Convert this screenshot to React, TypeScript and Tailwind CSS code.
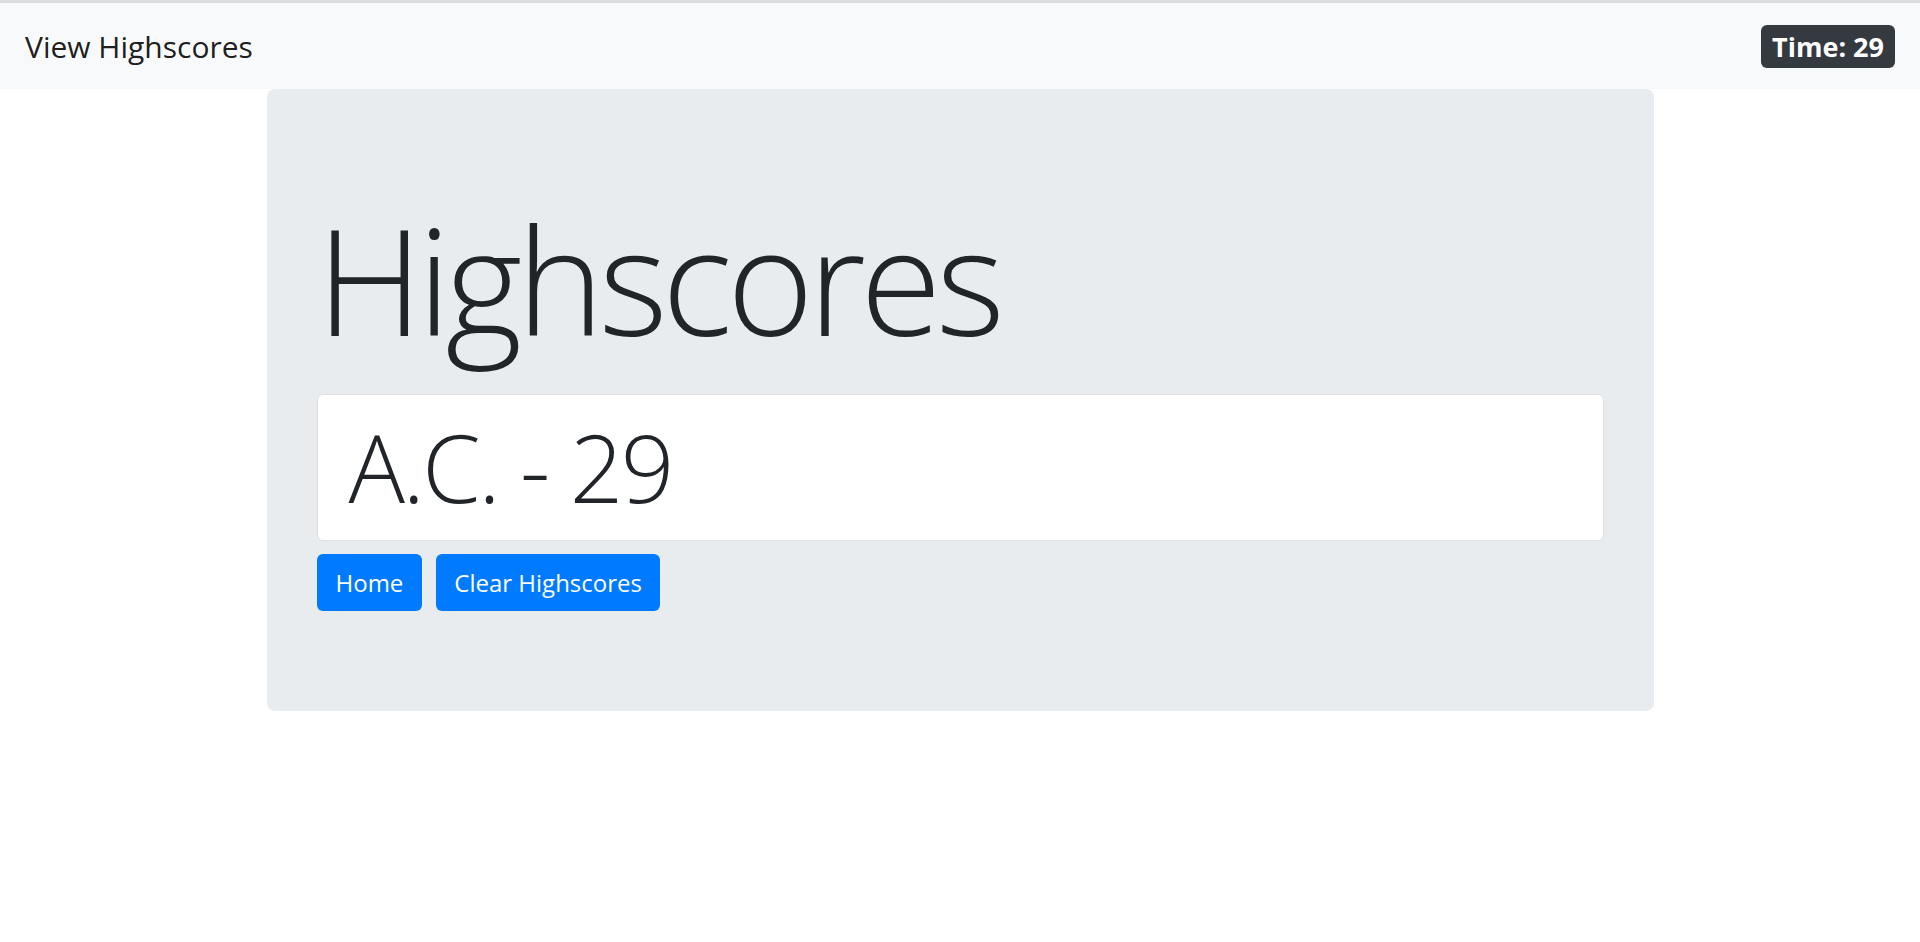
export default function App() {
  return (
    <div className="min-h-[942px] bg-white text-[#212529] font-['Open_Sans',sans-serif]">
      {/* Navbar */}
      <nav className="h-[89px] border-t-[3px] border-[#dadce0] bg-[#f8f9fa] px-[25px] flex items-center justify-between">
        <a className="text-[30px] leading-[47px] text-black/90">View Highscores</a>
        <span className="rounded-[6px] bg-[#343a40] px-[11px] h-[43px] flex items-center text-[27px] font-bold text-white leading-none">
          Time: 29
        </span>
      </nav>

      {/* Jumbotron */}
      <main className="w-[1387px] mx-auto rounded-[8px] bg-[#e9ecef] px-[50px] pt-[100px] pb-[100px]">
        <h1 className="text-[148px] font-light leading-[180px] tracking-[-5.5px] mb-[25px]">Highscores</h1>
        <ul>
          <li className="rounded-[6px] border border-[#dfdfdf] bg-white px-[31px] py-[19px] text-[94px] font-light leading-[107px] tracking-[-2.5px]">
            A.C. - 29
          </li>
        </ul>
        <div className="mt-[13px] flex gap-[14px]">
          <button className="h-[57px] rounded-[6px] bg-[#007bff] px-[19px] text-[24px] text-white">Home</button>
          <button className="h-[57px] rounded-[6px] bg-[#007bff] px-[18px] text-[24px] text-white">Clear Highscores</button>
        </div>
      </main>
    </div>
  );
}
